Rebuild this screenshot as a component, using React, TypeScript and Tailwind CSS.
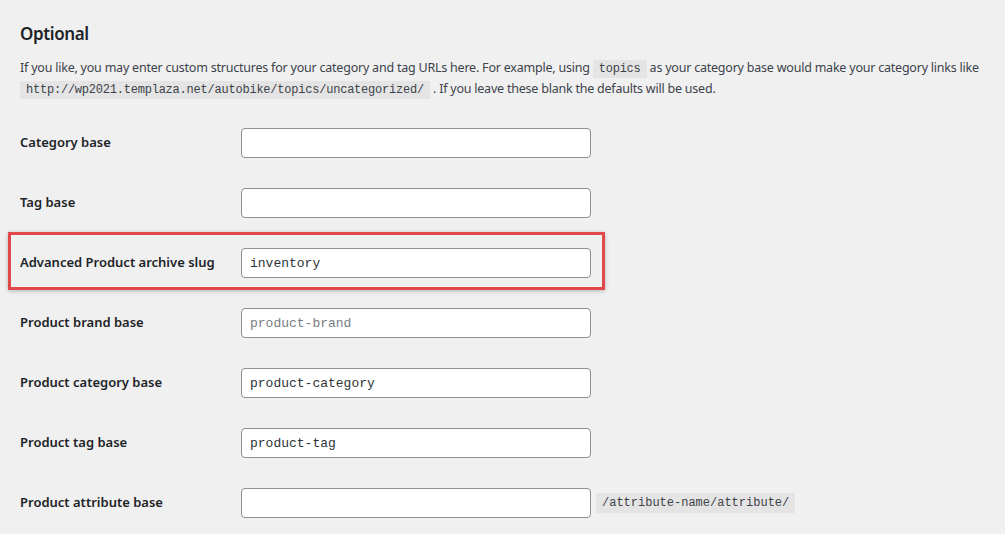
const rows = [
  { label: "Category base", value: "", placeholder: "" },
  { label: "Tag base", value: "", placeholder: "" },
  { label: "Advanced Product archive slug", value: "inventory", placeholder: "", highlight: true },
  { label: "Product brand base", value: "", placeholder: "product-brand" },
  { label: "Product category base", value: "product-category", placeholder: "" },
  { label: "Product tag base", value: "product-tag", placeholder: "" },
  { label: "Product attribute base", value: "", placeholder: "", suffix: "/attribute-name/attribute/" },
];

const sans = "font-['Noto_Sans','Open_Sans',sans-serif]";
const mono = "font-['Liberation_Mono','DejaVu_Sans_Mono',monospace]";

function Code({ children }: { children: React.ReactNode }) {
  return (
    <code className={`${mono} text-[12px] bg-[#e4e4e4] px-[6px] py-[2px] text-[#3c434a]`}>
      {children}
    </code>
  );
}

export default function App() {
  return (
    <div className={`min-h-[534px] w-full bg-[#f0f0f1] pl-5 pr-[10px] pt-[22px] text-[#3c434a] ${sans}`}>
      <h2 className="text-[17px] font-semibold text-[#1d2327] leading-6 tracking-[-0.4px]">Optional</h2>
      <p className="mt-[12px] text-[12.5px] leading-[20px] tracking-[-0.22px]">
        If you like, you may enter custom structures for your category and tag URLs here. For example, using{" "}
        <Code>topics</Code> as your category base would make your category links like{" "}
        <Code>http://wp2021.templaza.net/autobike/topics/uncategorized/</Code> . If you leave these blank the
        defaults will be used.
      </p>
      <div className="mt-[13px] flex flex-col">
        {rows.map((r) => (
          <div key={r.label} className="relative flex h-[60px] items-center">
            {r.highlight && (
              <div className="pointer-events-none absolute left-[-12px] top-[-1px] h-[58px] w-[597px] border-[3px] border-[#e0484a] shadow-[0_1px_4px_rgba(0,0,0,0.25)]" />
            )}
            <label className="w-[221px] shrink-0 text-[13px] font-semibold text-[#1d2327]">
              {r.label}
            </label>
            <input
              readOnly
              value={r.value}
              placeholder={r.placeholder}
              className={`h-[30px] w-[350px] rounded-[4px] border border-[#8c8f94] bg-white px-2 ${mono} text-[13px] text-[#2c3338] placeholder:text-[#787c82] outline-none`}
            />
            {r.suffix && (
              <span className={`ml-[5px] ${mono} text-[12px] leading-[20px] bg-[#e4e4e4] px-[6px] text-[#3c434a]`}>
                {r.suffix}
              </span>
            )}
          </div>
        ))}
      </div>
    </div>
  );
}
